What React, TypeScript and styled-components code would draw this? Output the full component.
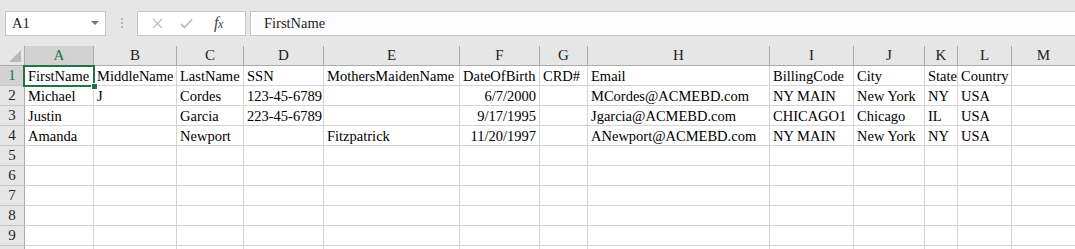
import React from "react";
import styled, { createGlobalStyle } from "styled-components";

const Global = createGlobalStyle`
  html, body { margin: 0; padding: 0; background: #ffffff; overflow: hidden; }
  body { width: 1075px; height: 249px; font-family: "Liberation Serif", "Times New Roman", serif; }
`;

const GREEN = "#217346";
const COLS = [69, 83, 67, 80, 136, 80, 48, 182, 84, 71, 33, 54, 64];
const LETTERS = ["A", "B", "C", "D", "E", "F", "G", "H", "I", "J", "K", "L", "M"];

const DATA: string[][] = [
  ["FirstName", "MiddleName", "LastName", "SSN", "MothersMaidenName", "DateOfBirth", "CRD#", "Email", "BillingCode", "City", "State", "Country", ""],
  ["Michael", "J", "Cordes", "123-45-6789", "", "6/7/2000", "", "MCordes@ACMEBD.com", "NY MAIN", "New York", "NY", "USA", ""],
  ["Justin", "", "Garcia", "223-45-6789", "", "9/17/1995", "", "Jgarcia@ACMEBD.com", "CHICAGO1", "Chicago", "IL", "USA", ""],
  ["Amanda", "", "Newport", "", "Fitzpatrick", "11/20/1997", "", "ANewport@ACMEBD.com", "NY MAIN", "New York", "NY", "USA", ""],
];
const NUMBERED_ROWS = 9;

const Page = styled.div`
  width: 1075px;
  height: 249px;
  overflow: hidden;
  background: #e6e6e6;
`;

const Toolbar = styled.div`
  display: flex;
  align-items: center;
  height: 46px;
  padding: 0 0 0 5px;
  box-sizing: border-box;
  background: #e6e6e6;
`;

const NameBox = styled.div`
  display: flex;
  align-items: center;
  justify-content: space-between;
  width: 101px;
  height: 25px;
  box-sizing: border-box;
  border: 1px solid #c6c6c6;
  background: #ffffff;
  padding: 0 6px 0 6px;
  font-size: 14.5px;
  color: #222;
`;

const Caret = styled.span`
  width: 0;
  height: 0;
  border-left: 4px solid transparent;
  border-right: 4px solid transparent;
  border-top: 4px solid #777;
`;

const Grip = styled.div`
  display: flex;
  flex-direction: column;
  gap: 2px;
  margin: 0 14px 0 15px;
  span { width: 2px; height: 2px; background: #b4b4b4; display: block; }
`;

const ButtonBox = styled.div`
  display: flex;
  align-items: center;
  width: 109px;
  height: 25px;
  box-sizing: border-box;
  border: 1px solid #c6c6c6;
  background: #ffffff;
  padding: 0 0 0 13px;
`;

const IconSlot = styled.span<{ $w: number }>`
  display: inline-flex;
  align-items: center;
  justify-content: center;
  width: ${(p) => p.$w}px;
`;

const Fx = styled.span`
  font-family: "Liberation Serif", serif;
  font-style: italic;
  font-size: 16px;
  color: #444;
  letter-spacing: -0.5px;
  margin-left: 5px;
  sub { font-size: 12px; vertical-align: 0; }
`;

const FormulaInput = styled.div`
  flex: 1;
  height: 25px;
  margin-left: 4px;
  box-sizing: border-box;
  border: 1px solid #c6c6c6;
  border-right: none;
  background: #fdfdfd;
  display: flex;
  align-items: center;
  padding-left: 13px;
  font-size: 14.5px;
  color: #222;
`;

const Grid = styled.div`
  display: grid;
  grid-template-columns: 25px ${COLS.map((c) => c + "px").join(" ")};
  grid-auto-rows: 20px;
  background: #ffffff;
`;

const Corner = styled.div`
  background: #e6e6e6;
  border-right: 1px solid #ababab;
  border-bottom: 1px solid #ababab;
  box-sizing: border-box;
  display: flex;
  align-items: flex-end;
  justify-content: flex-end;
  padding: 0 3px 3px 0;
`;

const ColHead = styled.div<{ $sel?: boolean }>`
  background: ${(p) => (p.$sel ? "#d2d2d2" : "#e6e6e6")};
  color: ${(p) => (p.$sel ? GREEN : "#222")};
  border-right: 1px solid #ababab;
  border-bottom: 1px solid ${(p) => (p.$sel ? GREEN : "#ababab")};
  box-sizing: border-box;
  font-size: 15px;
  display: flex;
  align-items: center;
  justify-content: center;
  line-height: 19px;
`;

const RowHead = styled.div<{ $sel?: boolean }>`
  background: ${(p) => (p.$sel ? "#d2d2d2" : "#e6e6e6")};
  color: ${(p) => (p.$sel ? GREEN : "#222")};
  border-right: 1px solid ${(p) => (p.$sel ? GREEN : "#ababab")};
  border-bottom: 1px solid #c6c6c6;
  box-sizing: border-box;
  font-size: 15px;
  display: flex;
  align-items: center;
  justify-content: center;
  line-height: 19px;
`;

const Cell = styled.div<{ $right?: boolean }>`
  position: relative;
  border-right: 1px solid #d4d4d4;
  border-bottom: 1px solid #d4d4d4;
  box-sizing: border-box;
  font-size: 14.5px;
  line-height: 20px;
  color: #000;
  white-space: nowrap;
  padding: 0 ${(p) => (p.$right ? "3px" : "0")} 0 ${(p) => (p.$right ? "0" : "3px")};
  text-align: ${(p) => (p.$right ? "right" : "left")};
`;

const Selection = styled.div`
  position: absolute;
  z-index: 2;
  left: -2px;
  top: -1px;
  right: -2px;
  bottom: -2px;
  border: 2px solid ${GREEN};
  pointer-events: none;
`;

const Handle = styled.div`
  position: absolute;
  right: -5px;
  bottom: -5px;
  width: 5px;
  height: 5px;
  background: ${GREEN};
  border: 1px solid #ffffff;
`;

const isDate = (s: string) => /^\d+\/\d+\/\d+$/.test(s);

export default function App() {
  const rows: string[][] = [];
  for (let r = 0; r < NUMBERED_ROWS + 1; r++) rows.push(DATA[r] ?? COLS.map(() => ""));

  return (
    <Page>
      <Global />
      <Toolbar>
        <NameBox>
          <span>A1</span>
          <Caret />
        </NameBox>
        <Grip>
          <span />
          <span />
          <span />
        </Grip>
        <ButtonBox>
          <IconSlot $w={12}>
            <svg width="11" height="11" viewBox="0 0 11 11">
              <path d="M1 1 L10 10 M10 1 L1 10" stroke="#bcbcbc" strokeWidth="1.3" fill="none" />
            </svg>
          </IconSlot>
          <IconSlot $w={46}>
            <svg width="13" height="11" viewBox="0 0 13 11">
              <path d="M1 6 L4.5 9.5 L12 1.5" stroke="#bcbcbc" strokeWidth="1.8" fill="none" />
            </svg>
          </IconSlot>
          <Fx>
            f<sub>x</sub>
          </Fx>
        </ButtonBox>
        <FormulaInput>FirstName</FormulaInput>
      </Toolbar>
      <Grid>
        <Corner>
          <svg width="12" height="12" viewBox="0 0 12 12">
            <polygon points="12,0 12,12 0,12" fill="#b9b9b9" />
          </svg>
        </Corner>
        {LETTERS.map((l, i) => (
          <ColHead key={l} $sel={i === 0}>
            {l}
          </ColHead>
        ))}
        {rows.map((row, r) => (
          <React.Fragment key={r}>
            <RowHead $sel={r === 0}>{r < NUMBERED_ROWS ? r + 1 : ""}</RowHead>
            {row.map((v, c) => (
              <Cell key={c} $right={isDate(v)}>
                {v}
                {r === 0 && c === 0 && (
                  <Selection>
                    <Handle />
                  </Selection>
                )}
              </Cell>
            ))}
          </React.Fragment>
        ))}
      </Grid>
    </Page>
  );
}
